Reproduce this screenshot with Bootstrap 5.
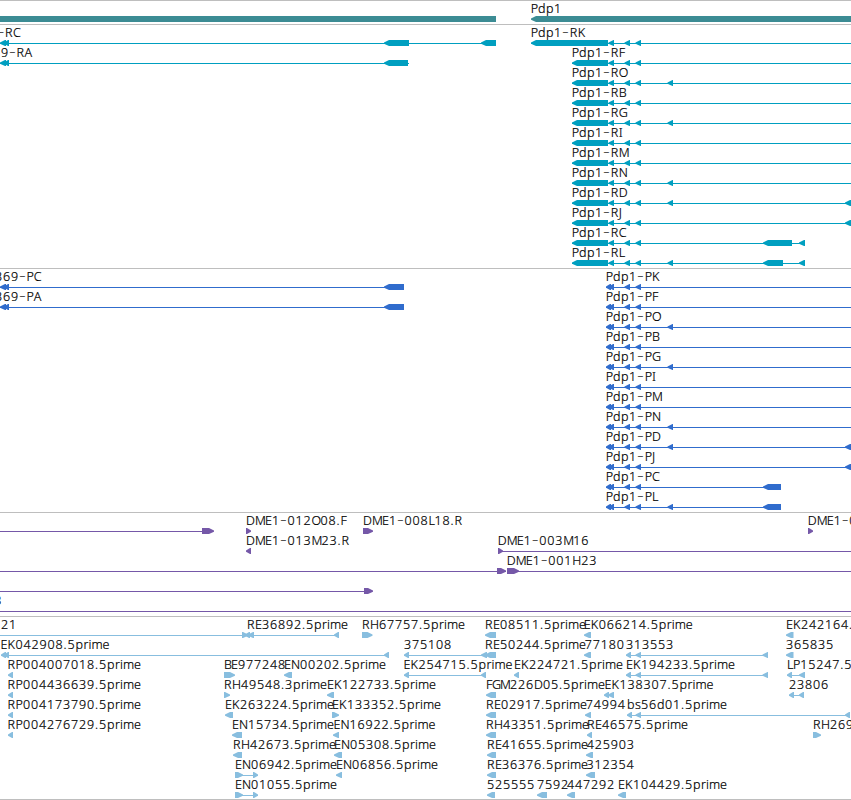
<!DOCTYPE html>
<html lang="en">
<head>
    <meta charset="UTF-8">
    <meta name="viewport" content="width=device-width, initial-scale=1.0">
    <title>Genome Tracks</title>

    <!-- Bootstrap CSS -->
    <link href="https://cdn.jsdelivr.net/npm/bootstrap@5.3.0/dist/css/bootstrap.min.css" rel="stylesheet">
    <style>
        body { height: 800px; }
        .track { border-top: 1px solid #bebebe; padding-top: 2px; }
        .track:not(:last-child) { padding-bottom: 1px; }
        .track:last-child { border-bottom: 1px solid #bebebe; }
        .track-gene { color: #3c8c94; }
        .track-transcript { color: #009fc0; }
        .track-protein { color: #306ccd; }
        .track-bac { color: #7558a8; }
        .track-est { color: #88bedf; }
        .lane { height: 20px; }
        .lane svg { width: 100%; height: 20px; overflow: visible; fill: currentColor; }
        .lane text { font: 300 12.5px "Noto Sans", "DejaVu Sans", sans-serif; fill: #000; stroke: #000; stroke-width: .2px; }
        .lane .hyphen { font: 300 19px "DejaVu Sans", sans-serif; fill: #333; stroke: none; }
    </style>
</head>
<body class="bg-white overflow-hidden">

    <main id="tracks" class="d-flex flex-column overflow-hidden"></main>

    <!-- Bootstrap JS -->
    <script src="https://cdn.jsdelivr.net/npm/bootstrap@5.3.0/dist/js/bootstrap.bundle.min.js"></script>

    <script>
        // Advance of each character in a label
        const advance = {
            '-': 7.6, '.': 4, A: 8, B: 7, C: 8, D: 9, E: 7, F: 6, G: 8, H: 9, I: 3, J: 4, K: 8, L: 6,
            M: 10, N: 9, O: 9, P: 7.3, R: 8, b: 8, d: 8, e: 7, i: 3, m: 11, p: 8, r: 5, s: 6
        };

        // A lane holds labels [x, text], lines [from, to] and arrows pointing left or right [from, to]
        const lane = (labels, lines, left = [], right = []) => ({ labels, lines, left, right });

        // Transcript and protein lanes of Pdp1 share their small exons
        const far = [667.5, 673];
        const edge = [845, 851];
        const small = [[624.5, 630], [635.5, 641]];
        const leftEnd = [[0, 6], [4, 9]];

        function transcript(name, extra = [], end = 851) {
            return lane([[571.4, 'Pdp1-' + name]], [[572, end]], [[572, 608], [608.5, 614], ...small, ...extra]);
        }

        function protein(name, extra = [], end = 851) {
            return lane([[605.4, 'Pdp1-' + name]], [[606, end]], [[606, 611], [609, 614], ...small, ...extra]);
        }

        // Put the arrows of a neighbouring gene in front of a lane
        function withGene(row, label, lines, left) {
            row.labels.unshift(label);
            row.lines.unshift(...lines);
            row.left.unshift(...left);
            return row;
        }

        const rk = lane([[530.4, 'Pdp1-RK']], [[531, 851]], [[531, 608], [608.5, 614], ...small]);

        const tracks = [
            { type: 'gene', rows: [
                lane([[530.4, 'Pdp1']], [], [[-10, 496], [531, 870]])
            ] },
            { type: 'transcript', rows: [
                withGene(rk, [-3, '-RC'], [[0, 496]], [...leftEnd, [384, 409], [481, 496]]),
                withGene(transcript('RF'), [0.5, '9-RA'], [[0, 409]], [...leftEnd, [384, 408]]),
                transcript('RO', [far]),
                transcript('RB'),
                transcript('RG', [far]),
                transcript('RI'),
                transcript('RM'),
                transcript('RN', [far]),
                transcript('RD', [far, edge]),
                transcript('RJ', [edge]),
                transcript('RC', [[763, 792], [799, 805]], 805),
                transcript('RL', [far, [763, 783], [799, 805]], 805)
            ] },
            { type: 'protein', rows: [
                withGene(protein('PK'), [-5.5, '369-PC'], [[0, 404]], [...leftEnd, [384, 404]]),
                withGene(protein('PF'), [-5.5, '369-PA'], [[0, 404]], [...leftEnd, [384, 404]]),
                protein('PO', [far]),
                protein('PB'),
                protein('PG', [far]),
                protein('PI'),
                protein('PM'),
                protein('PN', [far]),
                protein('PD', [far, edge]),
                protein('PJ', [edge]),
                protein('PC', [[763, 781]], 781),
                protein('PL', [far, [763, 781]], 781)
            ] },
            { type: 'bac', rows: [
                lane([[245.5, 'DME1-012O08.F'], [362.5, 'DME1-008L18.R'], [807.3, 'DME1-0']], [[0, 203]], [],
                    [[202, 214], [246, 251], [363, 373], [808, 813]]),
                lane([[245.5, 'DME1-013M23.R'], [497.3, 'DME1-003M16']], [[498, 851]], [[246, 251]], [[498, 503]]),
                lane([[506.3, 'DME1-001H23']], [[0, 506], [507, 851]], [], [[497, 506], [507, 519]]),
                lane([], [[0, 365]], [], [[364, 373]]),
                lane([[-6.2, '3']], [[0, 851]])
            ] },
            { type: 'est', rows: [
                lane([[0.5, '21'], [246.5, 'RE36892.5prime'], [361.5, 'RH67757.5prime'], [484.7, 'RE08511.5prime'],
                    [583.3, 'EK066214.5prime'], [785.5, 'EK242164.5prime']],
                    [[0, 339]],
                    [[245, 250], [248, 254], [334, 339], [485, 496], [584, 591], [786, 793.5]],
                    [[242, 248], [362, 372.5]]),
                lane([[0, 'EK042908.5prime'], [403.5, '375108'], [484.7, 'RE50244.5prime'], [584.3, '77180'],
                    [625.5, '313553'], [785.7, '365835']],
                    [[1, 389], [404, 487], [626, 768]],
                    [[1, 6], [4, 9], [384, 389], [404, 409], [481, 487], [485, 496], [584, 591], [626, 631],
                        [635.5, 641], [762.5, 768], [786, 793.5]]),
                lane([[7.2, 'RP004007018.5prime'], [223.5, 'BE977248'], [283.5, 'EN00202.5prime'],
                    [403.2, 'EK254715.5prime'], [513.5, 'EK224721.5prime'], [625.5, 'EK194233.5prime'],
                    [786.5, 'LP15247.5prime']],
                    [[404, 486], [626, 768], [787, 805]],
                    [[8, 13], [284, 292], [404, 409], [481, 486], [514, 519], [626, 631], [635.5, 641],
                        [762.5, 768], [787, 792], [799, 805]],
                    [[224, 235]]),
                lane([[7.2, 'RP004436639.5prime'], [223.5, 'RH49548.3prime'], [326.7, 'EK122733.5prime'],
                    [485.5, 'FGM226D05.5prime'], [604, 'EK138307.5prime'], [788.7, '23806']],
                    [[789, 804]],
                    [[8, 13], [327, 334], [486, 496], [604, 609], [608, 614], [789, 794], [799, 804]],
                    [[224, 230]]),
                lane([[7.2, 'RP004173790.5prime'], [224.7, 'EK263224.5prime'], [331.7, 'EK133352.5prime'],
                    [485.7, 'RE02917.5prime'], [585.3, '74994'], [626.7, 'bs56d01.5prime']],
                    [[627, 850]],
                    [[8, 13], [225, 233], [486, 496], [585, 591], [627, 632], [635.5, 641], [845, 850]],
                    [[332, 339]]),
                lane([[7.2, 'RP004276729.5prime'], [231.5, 'EN15734.5prime'], [333.2, 'EN16922.5prime'],
                    [485.7, 'RH43351.5prime'], [586.7, 'RE46575.5prime'], [812.7, 'RH26961.5prime']],
                    [],
                    [[8, 13], [232, 242], [333, 339], [486, 496], [587, 592]],
                    [[813, 821]]),
                lane([[232.5, 'RH42673.5prime'], [333.7, 'EN05308.5prime'], [486.5, 'RE41655.5prime'],
                    [586.3, '425903']],
                    [],
                    [[233, 242], [334, 342], [487, 496], [586, 593]]),
                lane([[234.7, 'EN06942.5prime'], [335.7, 'EN06856.5prime'], [486.5, 'RE36376.5prime'],
                    [586, '312354']],
                    [[235, 258]],
                    [[336, 342], [487, 496], [586, 595]],
                    [[235, 243], [253, 258]]),
                lane([[234.7, 'EN01055.5prime'], [486.7, '525555'], [536.7, '7592'], [566.5, '447292'],
                    [617.7, 'EK104429.5prime']],
                    [[235, 258]],
                    [[487, 495], [537, 547], [567, 575], [618, 626]],
                    [[235, 243], [253, 258]])
            ] }
        ];

        // Label with every character on its own advance
        function drawLabel([start, text]) {
            let x = start + 0.4;
            const xs = [];
            for (const ch of text) {
                xs.push(x.toFixed(1));
                x += advance[ch] || 8;
            }
            const body = text.replace('-', '<tspan class="hyphen" dy="1.3">-</tspan><tspan dy="-1.3">') +
                (text.includes('-') ? '</tspan>' : '');
            return `<text x="${xs.join(' ')}" y="10">${body}</text>`;
        }

        function drawLine([from, to]) {
            return `<rect x="${from}" y="16" width="${to - from}" height="1"/>`;
        }

        function drawArrow(from, to, dir) {
            const tip = dir === 'left' ? from : to;
            const back = dir === 'left' ? to : from;
            const step = dir === 'left' ? 1 : -1;
            const neck = Math.abs(back - tip) > 5 ? tip + 5 * step : back - step;
            return `<polygon points="${tip},15.4 ${neck},13 ${back},13 ${back},19 ${neck},19 ${tip},16.8"/>`;
        }

        // Labels go under the arrows, so descenders never cut into a bar
        document.getElementById('tracks').innerHTML = tracks.map(track => `
            <section class="track track-${track.type}">
                ${track.rows.map(row => `
                    <div class="lane"><svg class="d-block">
                        ${row.labels.map(drawLabel).join('')}
                        ${row.lines.map(drawLine).join('')}
                        ${row.left.map(a => drawArrow(a[0], a[1], 'left')).join('')}
                        ${row.right.map(a => drawArrow(a[0], a[1], 'right')).join('')}
                    </svg></div>`).join('')}
            </section>`).join('');
    </script>

</body>
</html>
